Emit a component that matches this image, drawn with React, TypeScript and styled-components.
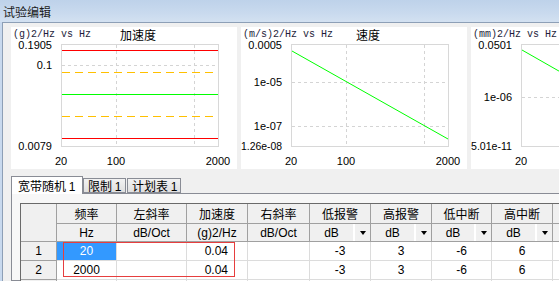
import React from 'react';
import styled, { createGlobalStyle } from 'styled-components';

const GlobalStyle = createGlobalStyle`
  html, body { margin: 0; padding: 0; background: #f0f0f0; }
  body {
    font-family: "Liberation Sans", "Noto Sans CJK SC", sans-serif;
    font-size: 12px;
    color: #000;
  }
`;

const CJK = `"Noto Sans CJK SC", "Liberation Sans", sans-serif`;

const Window = styled.div`
    width: 559px;
    height: 281px;
    overflow: hidden;
    display: flex;
    flex-direction: column;
    background: #c8d9ee;
`;

const TitleBar = styled.div`
    flex: none;
    height: 22px;
    padding-left: 3px;
    display: flex;
    align-items: center;
    font-family: ${CJK};
    font-size: 12px;
    color: #1b1b1b;
    background: linear-gradient(to bottom, #bed2ea 0%, #c9daee 60%, #d3e1f1 100%);
`;

const Frame = styled.div`
    flex: 1;
    min-height: 0;
    margin-left: 2px;
    border-top: 1px solid #8d9fb6;
    border-left: 1px solid #8d9fb6;
    background: #f0f0f0;
    padding: 4px 0 0 8px;
    display: flex;
    flex-direction: column;
`;

const ChartsRow = styled.div`
    flex: none;
    display: flex;
    gap: 4px;
    height: 142px;
`;

const ChartPanel = styled.div`
    flex: none;
    width: 226px;
    height: 142px;
    background: #fff;
`;

const TabStrip = styled.div`
    flex: none;
    margin-top: 7px;
    height: 17px;
    display: flex;
    align-items: flex-end;
    position: relative;
    z-index: 1;
`;

const Tab = styled.div<{ $active?: boolean; $w: number; $gap?: number }>`
    box-sizing: border-box;
    width: ${(p) => p.$w}px;
    margin-left: ${(p) => p.$gap || 0}px;
    height: ${(p) => (p.$active ? 18 : 15)}px;
    margin-bottom: ${(p) => (p.$active ? -1 : 0)}px;
    border: 1px solid #898c95;
    border-bottom: ${(p) => (p.$active ? 'none' : '1px solid #898c95')};
    background: ${(p) => (p.$active ? '#fff' : 'linear-gradient(to bottom, #f2f2f2, #e0e0e0)')};
    font-family: ${CJK};
    font-size: 12px;
    line-height: 14px;
    padding: ${(p) => (p.$active ? '2px 0 0 6px' : '0 0 0 4px')};
    white-space: nowrap;
`;

const Num = styled.span`
    font-family: "Liberation Sans", sans-serif;
`;

const TabPanel = styled.div`
    flex: 1;
    min-height: 0;
    border: 1px solid #898c95;
    border-right: none;
    background: #f7f7f7;
    padding: 9px 0 0 8px;
`;

const Grid = styled.div`
    position: relative;
    width: max-content;
    display: grid;
    grid-template-columns: 36px 60px 70px 61px 62px 61px 61px 60px 61px 60px;
    grid-template-rows: 20px 18px 19px 19px 19px;
    border-left: 1px solid #6a6a6a;
    border-top: 1px solid #6a6a6a;
    background: #fff;
`;

const Corner = styled.div`
    grid-row: 1 / 3;
    background: #f0f0f0;
    border-right: 1px solid #a0a0a0;
    border-bottom: 1px solid #a0a0a0;
`;

const HeadCell = styled.div<{ $cjk?: boolean }>`
    background: #f0f0f0;
    border-right: 1px solid #a0a0a0;
    border-bottom: 1px solid #a0a0a0;
    display: flex;
    align-items: center;
    justify-content: center;
    font-family: ${(p) => (p.$cjk ? CJK : '"Liberation Sans", sans-serif')};
    font-size: 12px;
    white-space: nowrap;
    overflow: hidden;
`;

const DropCell = styled.div`
    background: #f0f0f0;
    border-right: 1px solid #a0a0a0;
    border-bottom: 1px solid #a0a0a0;
    display: flex;
`;

const DropValue = styled.div`
    flex: 1;
    display: flex;
    align-items: center;
    justify-content: center;
    font-size: 12px;
    border-right: 2px solid #fff;
`;

const ArrowBox = styled.div`
    width: 15px;
    display: flex;
    align-items: center;
    justify-content: center;

    &::after {
        content: '';
        border-left: 3.5px solid transparent;
        border-right: 3.5px solid transparent;
        border-top: 4px solid #000;
        margin-top: 1px;
    }
`;

const RowHead = styled.div`
    background: #f0f0f0;
    border-right: 1px solid #a0a0a0;
    border-bottom: 1px solid #a0a0a0;
    display: flex;
    align-items: center;
    justify-content: center;
    font-size: 12px;
`;

const Cell = styled.div<{ $align?: 'center' | 'right'; $selected?: boolean }>`
    border-right: 1px solid #dcdcdc;
    border-bottom: 1px solid #dcdcdc;
    display: flex;
    align-items: center;
    justify-content: ${(p) => (p.$align === 'right' ? 'flex-end' : 'center')};
    padding-right: ${(p) => (p.$align === 'right' ? 19 : 0)}px;
    font-size: 12px;
    background: ${(p) => (p.$selected ? '#3399ff' : '#fff')};
    color: ${(p) => (p.$selected ? '#fff' : '#000')};
`;

const Highlight = styled.div`
    position: absolute;
    left: 42px;
    top: 38px;
    width: 172px;
    height: 35px;
    box-sizing: border-box;
    border: 1px solid #e63e3e;
    pointer-events: none;
`;

interface Tick {
    label: string;
    y: number;
    fit?: number; // squeeze long labels into this width
}

interface ChartProps {
    unit: string;
    title: string;
    yTicks: Tick[];
    hGrid: number[];
    children?: React.ReactNode;
}

const X_TICKS = [
    { label: '20', x: 50 },
    { label: '100', x: 105 },
    { label: '2000', x: 207 },
];

const Chart: React.FC<ChartProps> = ({ unit, title, yTicks, hGrid, children }) => (
    <ChartPanel>
        <svg width={226} height={142}>
            <text x={2} y={10} fontFamily="Liberation Mono, monospace" fontSize={10} fill="#1d1d3a">{unit}</text>
            <text x={127} y={13} textAnchor="middle" fontFamily="Noto Sans CJK SC, sans-serif" fontSize={12} fill="#000">{title}</text>
            {[105.5, 183.5].map((x) => (
                <line key={x} x1={x} y1={18} x2={x} y2={119} stroke="#d4d4d4" strokeDasharray="3 3" />
            ))}
            {hGrid.map((y) => (
                <line key={y} x1={51} y1={y + 0.5} x2={207} y2={y + 0.5} stroke="#d4d4d4" strokeDasharray="3 3" />
            ))}
            <rect x={50.5} y={17.5} width={157} height={102} fill="none" stroke="#d8d8d8" />
            {children}
            {yTicks.map((t) => (
                <text
                    key={t.label}
                    x={t.fit ? 41 - t.fit : 41}
                    y={t.y + 4}
                    textAnchor={t.fit ? 'start' : 'end'}
                    textLength={t.fit}
                    lengthAdjust={t.fit ? 'spacingAndGlyphs' : undefined}
                    fontFamily="Liberation Sans, sans-serif"
                    fontSize={11}
                    fill="#000"
                >
                    {t.label}
                </text>
            ))}
            {X_TICKS.map((t) => (
                <text key={t.label} x={t.x} y={138} textAnchor="middle" fontFamily="Liberation Sans, sans-serif" fontSize={11} fill="#000">{t.label}</text>
            ))}
        </svg>
    </ChartPanel>
);

const HLine = ({ y, color, dash }: { y: number; color: string; dash?: boolean }) => (
    <line x1={51} y1={y + 0.5} x2={207} y2={y + 0.5} stroke={color} strokeDasharray={dash ? '8 5' : undefined} />
);

const rows = [
    { n: '1', f: '20', a: '0.04', selected: true },
    { n: '2', f: '2000', a: '0.04' },
];

const limits = ['-3', '3', '-6', '6'];

export default function App() {
    return (
        <Window>
            <GlobalStyle />
            <TitleBar>试验编辑</TitleBar>
            <Frame>
                <ChartsRow>
                    <Chart
                        unit="(g)2/Hz vs Hz"
                        title="加速度"
                        yTicks={[{ label: '0.1905', y: 17.5 }, { label: '0.1', y: 38 }, { label: '0.0079', y: 119 }]}
                        hGrid={[38]}
                    >
                        <HLine y={23} color="#ff0000" />
                        <HLine y={45} color="#ffc000" dash />
                        <HLine y={67} color="#00ff00" />
                        <HLine y={89} color="#ffc000" dash />
                        <HLine y={111} color="#ff0000" />
                    </Chart>
                    <Chart
                        unit="(m/s)2/Hz vs Hz"
                        title="速度"
                        yTicks={[{ label: '0.0005', y: 17.5 }, { label: '1e-05', y: 55 }, { label: '1e-07', y: 99 }, { label: '1.26e-08', y: 119, fit: 41 }]}
                        hGrid={[55, 99]}
                    >
                        <line x1={51} y1={24} x2={207} y2={112} stroke="#00ff00" />
                    </Chart>
                    <Chart
                        unit="(mm)2/Hz vs Hz"
                        title="位移"
                        yTicks={[{ label: '0.0501', y: 17.5 }, { label: '1e-06', y: 70 }, { label: '5.01e-11', y: 119, fit: 41 }]}
                        hGrid={[70]}
                    >
                        <line x1={51} y1={23} x2={207} y2={112} stroke="#00ff00" />
                    </Chart>
                </ChartsRow>

                <TabStrip>
                    <Tab $active $w={72}>宽带随机 <Num>1</Num></Tab>
                    <Tab $w={43}>限制 <Num>1</Num></Tab>
                    <Tab $w={54} $gap={1}>计划表 <Num>1</Num></Tab>
                </TabStrip>
                <TabPanel>
                    <Grid>
                        <Corner />
                        <HeadCell $cjk>频率</HeadCell>
                        <HeadCell $cjk>左斜率</HeadCell>
                        <HeadCell $cjk>加速度</HeadCell>
                        <HeadCell $cjk>右斜率</HeadCell>
                        <HeadCell $cjk>低报警</HeadCell>
                        <HeadCell $cjk>高报警</HeadCell>
                        <HeadCell $cjk>低中断</HeadCell>
                        <HeadCell $cjk>高中断</HeadCell>
                        <HeadCell $cjk />

                        <HeadCell>Hz</HeadCell>
                        <HeadCell>dB/Oct</HeadCell>
                        <HeadCell>(g)2/Hz</HeadCell>
                        <HeadCell>dB/Oct</HeadCell>
                        {limits.map((_, i) => (
                            <DropCell key={i}>
                                <DropValue>dB</DropValue>
                                <ArrowBox />
                            </DropCell>
                        ))}
                        <HeadCell />

                        {rows.map((r) => (
                            <React.Fragment key={r.n}>
                                <RowHead>{r.n}</RowHead>
                                <Cell $selected={r.selected}>{r.f}</Cell>
                                <Cell />
                                <Cell $align="right">{r.a}</Cell>
                                <Cell />
                                {limits.map((v, i) => (
                                    <Cell key={i}>{v}</Cell>
                                ))}
                                <Cell />
                            </React.Fragment>
                        ))}

                        <RowHead />
                        {Array.from({ length: 9 }).map((_, i) => (
                            <Cell key={i} />
                        ))}

                        <Highlight />
                    </Grid>
                </TabPanel>
            </Frame>
        </Window>
    );
}
